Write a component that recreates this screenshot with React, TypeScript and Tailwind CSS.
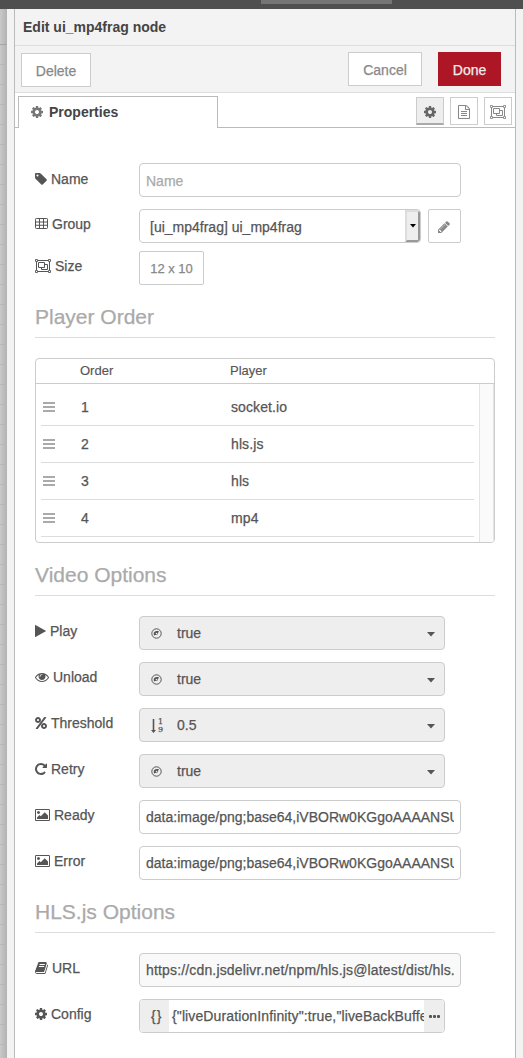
import type { ReactNode } from "react";

type IconProps = { box: string; w: number; h?: number; d: string; className?: string };

function Glyph({ box, w, h = 14, d, className = "" }: IconProps) {
  return (
    <svg viewBox={box} width={w} height={h} fill="currentColor" fillRule="evenodd" className={`shrink-0 ${className}`}>
      <path d={d} />
    </svg>
  );
}

const COG =
  "M1152 896q0-106-75-181t-181-75-181 75-75 181 75 181 181 75 181-75 75-181zm512-109v222q0 12-8 23t-20 13l-185 28q-19 54-39 91 35 50 107 138 10 12 10 25t-9 23q-27 37-99 108t-94 71q-12 0-26-9l-138-108q-44 23-91 38-16 136-29 186-7 28-36 28h-222q-14 0-24.5-8.5t-11.5-21.5l-28-184q-49-16-90-37l-141 107q-10 9-25 9-14 0-25-11-126-114-165-168-7-10-7-23 0-12 8-23 15-21 51-66.5t54-70.5q-27-50-41-99l-183-27q-13-2-21-12.5t-8-23.5v-222q0-12 8-23t19-13l186-28q14-46 39-92-40-57-107-138-10-12-10-24 0-10 9-23 26-36 98.5-107.5t94.5-71.5q13 0 26 10l138 107q44-23 91-38 16-136 29-186 7-28 36-28h222q14 0 24.5 8.5t11.5 21.5l28 184q49 16 90 37l142-107q9-9 24-9 13 0 25 10 129 119 165 170 7 8 7 22 0 12-8 23-15 21-51 66.5t-54 70.5q26 50 41 98l183 28q13 2 21 12.5t8 23.5z";
const TAG =
  "M576 448q0-53-37.5-90.5t-90.5-37.5-90.5 37.5-37.5 90.5 37.5 90.5 90.5 37.5 90.5-37.5 37.5-90.5zm1067 576q0 53-37 90l-491 492q-39 37-91 37-53 0-90-37l-715-716q-38-37-64.5-101t-26.5-117v-416q0-52 38-90t90-38h416q53 0 117 26.5t102 64.5l715 714q37 39 37 91z";
const EYE =
  "M1664 960q-152-236-381-353 61 104 61 225 0 185-131.5 316.5t-316.5 131.5-316.5-131.5-131.5-316.5q0-121 61-225-229 117-381 353 133 205 333.5 326.5t434.5 121.5 434.5-121.5 333.5-326.5zm-720-384q0-20-14-34t-34-14q-125 0-214.5 89.5t-89.5 214.5q0 20 14 34t34 14 34-14 14-34q0-86 61-147t147-61q20 0 34-14t14-34zm848 384q0 34-20 69-140 230-376.5 368.5t-499.5 138.5-499.5-139-376.5-368q-20-35-20-69t20-69q140-229 376.5-368t499.5-139 499.5 139 376.5 368q20 35 20 69z";
const FILE =
  "M1596 380q28 28 48 76t20 88v1152q0 40-28 68t-68 28h-1344q-40 0-68-28t-28-68v-1600q0-40 28-68t68-28h896q40 0 88 20t76 48zm-444-244v376h376q-10-29-22-41l-313-313q-12-12-41-22zm384 1528v-1024h-416q-40 0-68-28t-28-68v-416h-768v1536h1280zm-1024-864q0-14 9-23t23-9h704q14 0 23 9t9 23v64q0 14-9 23t-23 9h-704q-14 0-23-9t-9-23v-64zm736 224q14 0 23 9t9 23v64q0 14-9 23t-23 9h-704q-14 0-23-9t-9-23v-64q0-14 9-23t23-9h704zm0 256q14 0 23 9t9 23v64q0 14-9 23t-23 9h-704q-14 0-23-9t-9-23v-64q0-14 9-23t23-9h704z";
const PERCENT =
  "M1408 1280q0-52-38-90t-90-38-90 38-38 90 38 90 90 38 90-38 38-90zm-768-768q0-52-38-90t-90-38-90 38-38 90 38 90 90 38 90-38 38-90zm1024 768q0 159-112.5 271.5t-271.5 112.5-271.5-112.5-112.5-271.5 112.5-271.5 271.5-112.5 271.5 112.5 112.5 271.5zm-96-1088q0 20-13 38l-1056 1408q-19 26-51 26h-160q-26 0-45-19t-19-45q0-20 13-38l1056-1408q19-26 51-26h160q26 0 45 19t19 45zm-672 320q0 159-112.5 271.5t-271.5 112.5-271.5-112.5-112.5-271.5 112.5-271.5 271.5-112.5 271.5 112.5 112.5 271.5z";
const REPEAT =
  "M1664 256v448q0 26-19 45t-45 19h-448q-42 0-59-40-17-39 14-69l138-138q-148-137-349-137-104 0-198.5 40.5t-163.5 109.5-109.5 163.5-40.5 198.5 40.5 198.5 109.5 163.5 163.5 109.5 198.5 40.5q119 0 225-52t179-147q7-10 23-12 15 0 25 9l137 138q9 8 9.5 20.5t-7.5 22.5q-109 132-264 204.5t-327 72.5q-156 0-298-61t-245-164-164-245-61-298 61-298 164-245 245-164 298-61q147 0 284.5 55.5t244.5 156.5l130-129q29-31 70-14 39 17 39 59z";
const PLAY = "M1576 927l-1328 738q-23 13-39.5 3t-16.5-36v-1472q0-26 16.5-36t39.5 3l1328 738q23 13 23 31t-23 31z";
const PICTURE =
  "M640 576q0 80-56 136t-136 56-136-56-56-136 56-136 136-56 136 56 56 136zm1024 384v448h-1408v-192l320-320 160 160 512-512zm96-704h-1600q-13 0-22.5 9.5t-9.5 22.5v1216q0 13 9.5 22.5t22.5 9.5h1600q13 0 22.5-9.5t9.5-22.5v-1216q0-13-9.5-22.5t-22.5-9.5zm160 32v1216q0 66-47 113t-113 47h-1600q-66 0-113-47t-47-113v-1216q0-66 47-113t113-47h1600q66 0 113 47t47 113z";
const BOOK =
  "M1703 478q40 57 18 129l-275 906q-19 64-76.5 107.5t-122.5 43.5h-923q-77 0-148.5-53.5t-99.5-131.5q-24-67-2-127 0-4 3-27t4-37q1-8-3-21.5t-3-19.5q2-11 8-21t16.5-23.5 16.5-23.5q23-38 45-91.5t30-91.5q3-10 .5-30t-.5-28q3-11 17-28t17-23q21-36 42-92t25-90q1-9-2.5-32t.5-28q4-13 22-30.5t22-22.5q19-26 42.5-84.5t27.5-96.5q1-8-3-25.5t-2-26.5q2-8 9-18t18-23 17-21q8-12 16.5-30.5t15-35 16-36 19.5-32 26.5-23.5 36-11.5 47.5 5.5l-1 3q38-9 51-9h761q74 0 114 56t18 130l-274 906q-36 119-71.5 153.5t-128.5 34.5h-869q-27 0-38 15-11 16-1 43 24 70 144 70h923q29 0 56-15.5t35-41.5l300-987q7-22 5-57 38 15 59 43zm-1064 2q-4 13 2 22.5t20 9.5h608q13 0 25.5-9.5t16.5-22.5l21-64q4-13-2-22.5t-20-9.5h-608q-13 0-25.5 9.5t-16.5 22.5zm-83 256q-4 13 2 22.5t20 9.5h608q13 0 25.5-9.5t16.5-22.5l21-64q4-13-2-22.5t-20-9.5h-608q-13 0-25.5 9.5t-16.5 22.5z";
const PENCIL =
  "M491 1536l91-91-235-235-91 91v107h128v128h107zm523-928q0-22-22-22-10 0-17 7l-542 542q-7 7-7 17 0 22 22 22 10 0 17-7l542-542q7-7 7-17zm-54-192l416 416-832 832h-416v-416zm683 96q0 53-37 90l-166 166-416-416 166-165q36-38 90-38 53 0 91 38l235 234q37 39 37 91z";

const CogIcon = ({ className = "" }: { className?: string }) => (
  <Glyph box="128 0 1536 1792" w={12} d={COG} className={className} />
);
const PictureIcon = () => <Glyph box="0 0 1920 1792" w={15} d={PICTURE} />;

function TableIcon() {
  return (
    <svg width="13" height="14" viewBox="0 0 13 14" className="shrink-0" fill="none" stroke="currentColor">
      <rect x=".5" y="1.5" width="12" height="10" rx=".8" />
      <path d="M.5 5h12M.5 8.25h12M4.5 2v9.5M8.5 2v9.5" />
    </svg>
  );
}

function GroupIcon() {
  return (
    <svg width="16" height="14" viewBox="0 0 16 14" className="shrink-0" fill="none" stroke="currentColor">
      <path d="M3 1.5h10M3 12.5h10M1.5 3v8M14.5 3v8" />
      <path d="M.5.5h2v2h-2zM13.5.5h2v2h-2zM.5 11.5h2v2h-2zM13.5 11.5h2v2h-2z" strokeWidth=".9" />
      <path d="M3.5 3.5h6v5h-6zM9.5 5.5h3v5h-6v-2" />
    </svg>
  );
}

function BoolIcon() {
  return (
    <svg width="11" height="11" viewBox="0 0 11 11" className="mt-px shrink-0">
      <circle cx="5.5" cy="5.5" r="4.7" fill="none" stroke="currentColor" strokeWidth="1" />
      <path d="M7.9 2.9 6.6 6.2A1.3 1.3 0 0 1 5 6.7L3.2 7.6A3 3 0 0 1 5.4 2.9z" fill="currentColor" />
      <circle cx="5.5" cy="5.5" r=".8" fill="#eee" />
    </svg>
  );
}

function NumberIcon() {
  return (
    <span className="mt-[2px] flex w-3 items-center">
      <svg width="5" height="14" viewBox="0 0 5 14" className="shrink-0" fill="currentColor">
        <path d="M1.7 0h1.6v11H5L2.5 14 0 11h1.7z" />
      </svg>
      <span className="ml-[2px] flex flex-col font-['DejaVu_Serif',serif] text-[8px] leading-[8px]">
        <span>1</span>
        <span>9</span>
      </span>
    </span>
  );
}

function Caret() {
  return (
    <svg width="8" height="5" viewBox="0 0 8 5" fill="currentColor" className="mt-[2px] shrink-0">
      <path d="M0 0h8L4 4.6z" />
    </svg>
  );
}

type RowProps = { icon: ReactNode; label: string; gap?: string; shift?: string; children: ReactNode };

function Row({ icon, label, gap = "gap-1", shift = "pt-[7px]", children }: RowProps) {
  return (
    <div className="flex h-[34px]">
      <div className={`flex h-[23px] w-[104px] shrink-0 items-center leading-4 ${gap} ${shift}`}>
        {icon}
        <span>{label}</span>
      </div>
      {children}
    </div>
  );
}

function Heading({ children }: { children: ReactNode }) {
  return <h3 className="h-[33px] border-b border-[#ddd] text-[21px] leading-[24px] text-[#aaa]">{children}</h3>;
}

function TypedSelect({ icon, value }: { icon: ReactNode; value: string }) {
  return (
    <div className="flex h-[34px] w-[306px] items-center rounded border border-[#ccc] bg-[#eee] pr-[9px] pl-[11px]">
      <span className="flex w-[26px]">{icon}</span>
      <span className="flex-1">{value}</span>
      <Caret />
    </div>
  );
}

function TextBox({ value, look = "bg-white" }: { value: string; look?: string }) {
  return (
    <div className={`h-[34px] w-[322px] rounded border border-[#ccc] px-[6px] ${look}`}>
      <div className="overflow-hidden leading-8 whitespace-nowrap">{value}</div>
    </div>
  );
}

const PLAYERS = ["socket.io", "hls.js", "hls", "mp4"];
const IMAGE_DATA = "data:image/png;base64,iVBORw0KGgoAAAANSU";

export default function App() {
  return (
    <div className="flex h-[1058px] w-[523px] flex-col overflow-hidden bg-white font-['Liberation_Sans',Arial,sans-serif] text-[14px] text-[#555] [-webkit-text-stroke:0.25px_currentColor]">
      <div className="h-[9px] shrink-0 bg-[#4f4f4f] pl-[261px]">
        <div className="h-1 w-[131px] bg-[#757575]" />
      </div>
      <div className="flex flex-1">
        <div className="flex w-[7px] flex-col overflow-hidden bg-linear-to-r from-[#c9c9c9] to-[#b2b2b2]">
          <div className="h-[36px] shrink-0 border-b border-[#a4a4a4]" />
          <div className="h-[1013px]">
            {Array.from({ length: 50 }, (_, i) => (
              <div key={i} className="h-5 w-[6px] border-b border-[#b6b6b6]" />
            ))}
          </div>
        </div>
        <div className="w-2 border-r border-[#bbb] bg-[#f3f3f3]" />
        <div className="flex w-[500px] flex-col">
          <div className="h-[37px] border-b border-[#ddd] bg-[#f3f3f3] pl-2 leading-[36px] font-bold text-[#444] [-webkit-text-stroke:0]">
            Edit ui_mp4frag node
          </div>
          <div className="flex h-[47px] border-b border-[#ddd] bg-[#f3f3f3] pt-[6px] pr-[14px] pl-[6px] text-[#888]">
            <button className="mt-px h-[34px] w-[70px] border border-[#ccc] bg-white pt-[2px]">Delete</button>
            <span className="flex-1" />
            <button className="h-[34px] w-[74px] border border-[#ccc] bg-white pt-[2px]">Cancel</button>
            <button className="ml-4 h-[34px] w-[63px] bg-[#ad1625] pt-[2px] text-[#eee]">Done</button>
          </div>
          <div className="flex h-[35px] shrink-0 pt-[3px]">
            <div className="w-[3px] border-b border-[#bbb]" />
            <div className="flex w-[200px] items-center gap-[6px] border border-b-0 border-[#bbb] pl-3 font-bold text-[#444] [-webkit-text-stroke:0]">
              <CogIcon className="-mt-px text-[#777]" />
              Properties
            </div>
            <div className="flex flex-1 justify-end gap-[6px] border-b border-[#bbb] pt-px pr-[3px] text-[#888]">
              <div className="flex h-7 w-7 items-center justify-center border border-b-2 border-[#ccc] border-b-[#aaa] bg-[#eee] text-[#666]">
                <CogIcon className="mt-[2px]" />
              </div>
              <div className="flex h-7 w-7 items-center justify-center border border-[#ccc] pt-px">
                <Glyph box="128 0 1536 1792" w={12} d={FILE} />
              </div>
              <div className="flex h-7 w-7 items-center justify-center border border-[#ccc] pt-px">
                <GroupIcon />
              </div>
            </div>
          </div>

          <div className="flex flex-col px-5 pt-[35px]">
            <Row icon={<Glyph box="128 0 1536 1792" w={12} d={TAG} />} label="Name" shift="pt-[9px]">
              <div className="h-[34px] w-[322px] rounded border border-[#ccc] px-[6px] pt-px leading-[33px] text-[#aaa]">Name</div>
            </Row>
            <div className="h-3" />
            <Row icon={<TableIcon />} label="Group">
              <div className="flex h-[34px] w-[282px] justify-between overflow-hidden rounded border border-[#ccc] pl-[10px]">
                <span className="pt-px leading-[33px]">[ui_mp4frag] ui_mp4frag</span>
                <span className="flex w-[15px] items-center justify-center rounded-r-[3px] border-2 border-[#ddd] border-r-[#999] border-b-[#999] bg-[#eee] text-black">
                  <svg width="6" height="4" viewBox="0 0 6 4"><path d="M0 0h6L3 3.4z" /></svg>
                </span>
              </div>
              <div className="ml-[7px] flex h-[34px] w-[33px] items-center justify-center rounded-xs border border-[#ccc] pr-px pt-px text-[#888]">
                <Glyph box="128 0 1536 1792" w={12} d={PENCIL} />
              </div>
            </Row>
            <div className="h-2" />
            <Row icon={<GroupIcon />} label="Size">
              <div className="flex h-[34px] w-[65px] items-center justify-center rounded-xs border border-[#ccc] pt-px text-[13px] text-[#888]">12 x 10</div>
            </Row>
            <div className="h-5" />
            <Heading>Player Order</Heading>

            <div className="mt-5 h-[185px] overflow-hidden rounded border border-[#ccc]">
              <div className="flex h-[25px] border-b border-[#ccc] pl-[44px] text-[13px] leading-6 [-webkit-text-stroke:0.15px_currentColor]">
                <span className="w-[150px]">Order</span>
                <span>Player</span>
              </div>
              <div className="flex h-[158px]">
                <div className="flex w-[443px] flex-col pt-[5px] pr-[5px] pl-[5px]">
                  {PLAYERS.map((name, i) => (
                    <div key={name} className="flex h-[37px] w-[433px] shrink-0 items-center border-b border-[#ddd]">
                      <span className="ml-[2px] flex w-[38px] flex-col gap-[2px]">
                        <span className="h-[2px] w-3 bg-[#aaa]" />
                        <span className="h-[2px] w-3 bg-[#aaa]" />
                        <span className="h-[2px] w-3 bg-[#aaa]" />
                      </span>
                      <span className="w-[150px]">{i + 1}</span>
                      <span className="tracking-[0.1px]">{name}</span>
                    </div>
                  ))}
                </div>
                <div className="flex-1 border-x border-[#e4e4e4] bg-[#fafafa]" />
              </div>
            </div>

            <div className="h-5" />
            <Heading>Video Options</Heading>
            <div className="mt-5 flex flex-col gap-3">
              <Row icon={<Glyph box="192 0 1408 1792" w={11} d={PLAY} />} label="Play">
                <TypedSelect icon={<BoolIcon />} value="true" />
              </Row>
              <Row icon={<Glyph box="0 0 1792 1792" w={14} d={EYE} />} label="Unload">
                <TypedSelect icon={<BoolIcon />} value="true" />
              </Row>
              <Row icon={<Glyph box="128 0 1536 1792" w={12} d={PERCENT} />} label="Threshold">
                <TypedSelect icon={<NumberIcon />} value="0.5" />
              </Row>
              <Row icon={<Glyph box="128 0 1536 1792" w={12} d={REPEAT} />} label="Retry">
                <TypedSelect icon={<BoolIcon />} value="true" />
              </Row>
              <Row icon={<PictureIcon />} label="Ready">
                <TextBox value={IMAGE_DATA} />
              </Row>
              <Row icon={<PictureIcon />} label="Error">
                <TextBox value={IMAGE_DATA} />
              </Row>
            </div>

            <div className="h-5" />
            <Heading>HLS.js Options</Heading>
            <div className="mt-5 flex flex-col gap-3">
              <Row icon={<Glyph box="64 0 1664 1792" w={13} d={BOOK} />} label="URL">
                <TextBox value="https://cdn.jsdelivr.net/npm/hls.js@latest/dist/hls.m" look="bg-[#f9f9f9] tracking-[0.16px]" />
              </Row>
              <Row icon={<CogIcon />} label="Config">
                <div className="flex h-[34px] w-[306px] overflow-hidden rounded border border-[#ccc] leading-8">
                  <span className="w-[29px] shrink-0 bg-[#eee] pl-[11px] tracking-[1px]">{"{}"}</span>
                  <span className="w-[255px] shrink-0 overflow-hidden pl-[3px] tracking-[0.12px] whitespace-nowrap">
                    {'{"liveDurationInfinity":true,"liveBackBuffe'}
                  </span>
                  <span className="flex flex-1 items-center justify-center gap-px bg-[#eee]">
                    <span className="h-[3px] w-[3px] rounded-[1px] bg-[#555]" />
                    <span className="h-[3px] w-[3px] rounded-[1px] bg-[#555]" />
                    <span className="h-[3px] w-[3px] rounded-[1px] bg-[#555]" />
                  </span>
                </div>
              </Row>
            </div>
          </div>
        </div>
        <div className="flex-1 border-l border-[#bbb] bg-[#f3f3f3]" />
      </div>
    </div>
  );
}
